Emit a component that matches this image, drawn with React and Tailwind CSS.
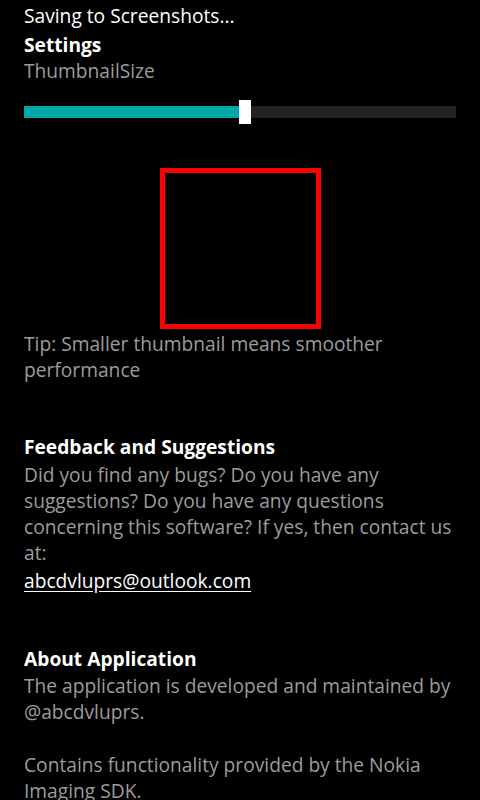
import React from 'react';

const Settings = () => {
  return (
    <div className="w-[480px] h-[800px] overflow-hidden bg-black px-6 font-['Open_Sans',sans-serif] text-[19.2px] leading-[26px] text-[#9c9c9c]">
      {/* status line */}
      <p className="pt-[3px] text-white">Saving to Screenshots...</p>

      <h2 className="mt-[3px] font-bold text-white">Settings</h2>
      <p>ThumbnailSize</p>

      {/* slider */}
      <div className="relative mt-[16px] h-6">
        <div className="absolute left-0 right-0 top-[6px] h-3 bg-[#232323]" />
        <div className="absolute left-0 top-[6px] h-3 w-[215px] bg-[#00a9a9]" />
        <div className="absolute left-[215px] top-0 h-6 w-3 bg-white" />
      </div>

      {/* thumbnail preview */}
      <div className="mt-[44px] ml-[136px] h-[161px] w-[161px] border-[5px] border-[#ff0000]" />

      <p className="mt-[2px]">Tip: Smaller thumbnail means smoother performance</p>

      {/* feedback */}
      <h2 className="mt-[51px] font-bold text-white">Feedback and Suggestions</h2>
      <p className="mt-[2px]">
        Did you find any bugs? Do you have any suggestions? Do you have any questions concerning this software? If yes, then contact us at:
      </p>
      <p className="mt-[2px] text-white underline underline-offset-[3px]">abcdvluprs@outlook.com</p>

      {/* about */}
      <h2 className="mt-[52px] font-bold text-white">About Application</h2>
      <p className="mt-px">The application is developed and maintained by @abcdvluprs.</p>
      <p className="mt-[27px]">Contains functionality provided by the Nokia Imaging SDK.</p>
    </div>
  );
};

export default Settings;
